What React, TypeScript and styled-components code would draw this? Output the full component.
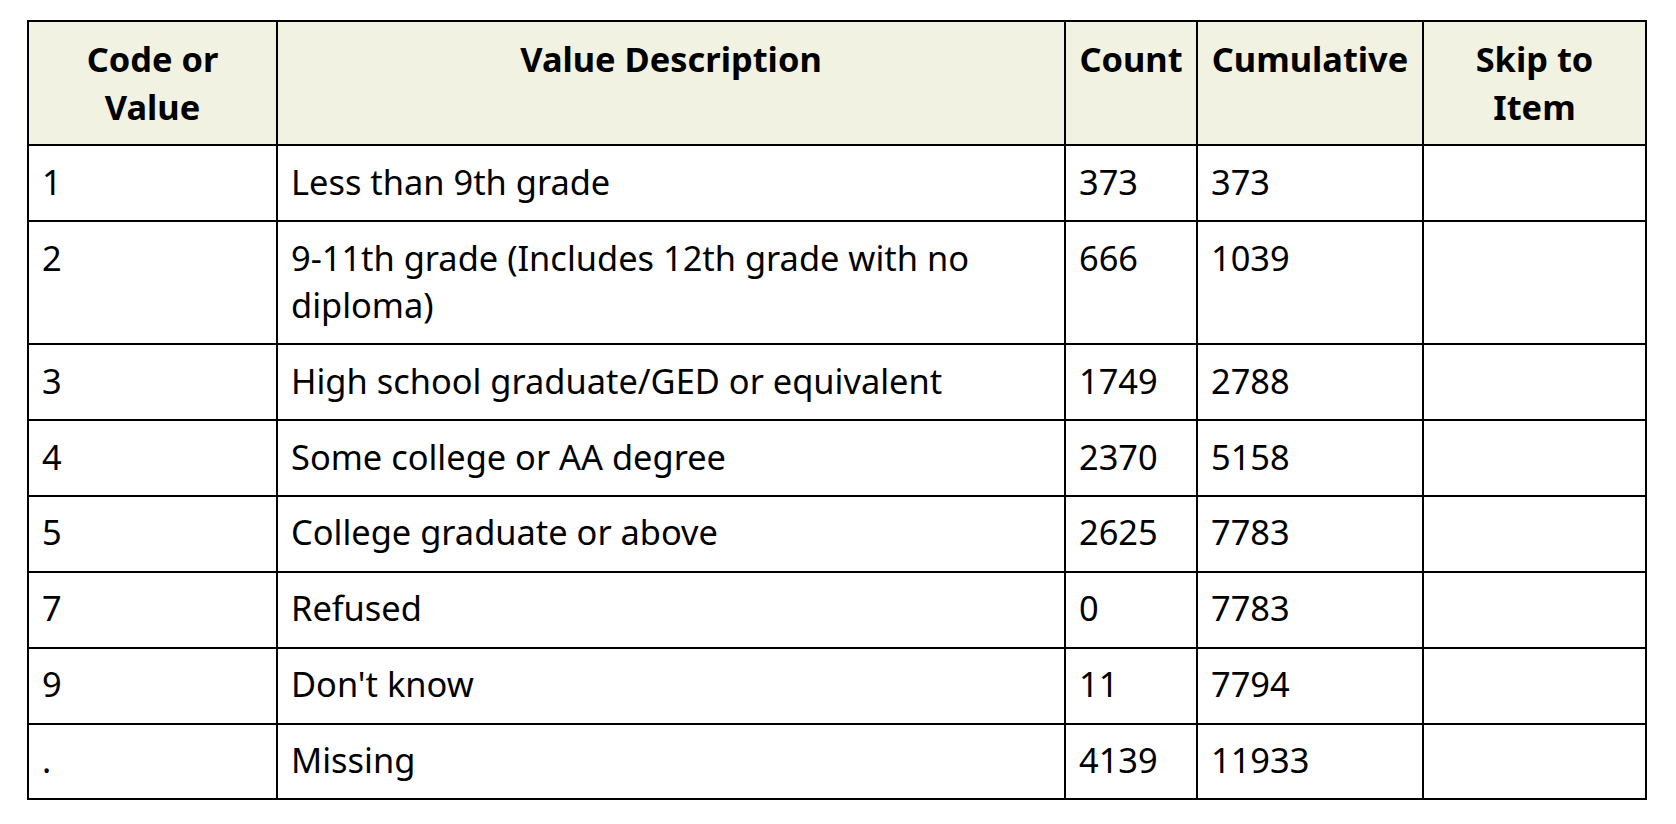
import React from "react";
import styled, { createGlobalStyle } from "styled-components";

const GlobalStyle = createGlobalStyle`
  html, body {
    margin: 0;
    padding: 0;
    background: #ffffff;
  }
  body {
    font-family: "Noto Sans", "Open Sans", sans-serif;
    color: #000000;
  }
`;

const Page = styled.div`
  padding: 20px 0 0 27px;
`;

const Table = styled.table`
  width: 1620px;
  table-layout: fixed;
  border-collapse: collapse;
  border: 2px solid #000;
  font-family: "Noto Sans", "Open Sans", sans-serif;
  font-size: 34.4px;
  line-height: 46.75px;
  color: #000;
`;

const HeadCell = styled.th`
  background: #f2f2e2;
  border: 2px solid #000;
  padding: 13px 13px 14.2px;
  font-weight: 700;
  text-align: center;
  vertical-align: top;
  line-height: 47.5px;
`;

const Cell = styled.td`
  border: 2px solid #000;
  padding: 12.8px 13px 14.4px;
  font-weight: 400;
  text-align: left;
  vertical-align: top;
`;

type Row = {
  code: string;
  desc: string;
  count: string;
  cumulative: string;
  skip: string;
};

const rows: Row[] = [
  { code: "1", desc: "Less than 9th grade", count: "373", cumulative: "373", skip: "" },
  { code: "2", desc: "9-11th grade (Includes 12th grade with no diploma)", count: "666", cumulative: "1039", skip: "" },
  { code: "3", desc: "High school graduate/GED or equivalent", count: "1749", cumulative: "2788", skip: "" },
  { code: "4", desc: "Some college or AA degree", count: "2370", cumulative: "5158", skip: "" },
  { code: "5", desc: "College graduate or above", count: "2625", cumulative: "7783", skip: "" },
  { code: "7", desc: "Refused", count: "0", cumulative: "7783", skip: "" },
  { code: "9", desc: "Don't know", count: "11", cumulative: "7794", skip: "" },
  { code: ".", desc: "Missing", count: "4139", cumulative: "11933", skip: "" },
];

const widths = [249, 788, 132, 226, 223];

export default function App() {
  return (
    <>
      <GlobalStyle />
      <Page>
        <Table>
          <colgroup>
            {widths.map((w, i) => (
              <col key={i} style={{ width: `${w}px` }} />
            ))}
          </colgroup>
          <thead>
            <tr>
              <HeadCell>Code or Value</HeadCell>
              <HeadCell>Value Description</HeadCell>
              <HeadCell>Count</HeadCell>
              <HeadCell>Cumulative</HeadCell>
              <HeadCell>Skip to Item</HeadCell>
            </tr>
          </thead>
          <tbody>
            {rows.map((r, i) => (
              <tr key={i}>
                <Cell>{r.code}</Cell>
                <Cell>{r.desc}</Cell>
                <Cell>{r.count}</Cell>
                <Cell>{r.cumulative}</Cell>
                <Cell>{r.skip}</Cell>
              </tr>
            ))}
          </tbody>
        </Table>
      </Page>
    </>
  );
}
